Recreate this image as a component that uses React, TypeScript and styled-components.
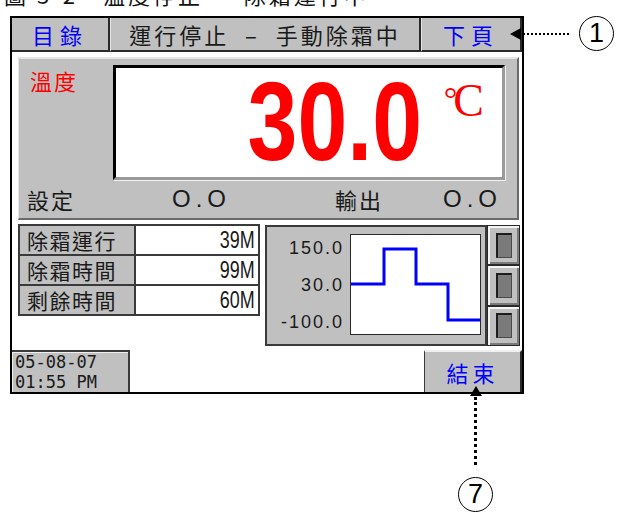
import styled, { createGlobalStyle } from "styled-components";

const GlobalStyle = createGlobalStyle`
   body {
      margin: 0;
      background: #fff;
      font-family: "Noto Sans CJK TC", "Noto Sans", sans-serif;
   }
`;

const GRAY = "#c0c0c0";
const CJK = `"Noto Sans CJK TC", "Noto Sans CJK SC", sans-serif`;

const rows = [
   { label: "除霜運行", value: "39M" },
   { label: "除霜時間", value: "99M" },
   { label: "剩餘時間", value: "60M" },
];

export default function App() {
   return (
      <Page>
         <GlobalStyle />
         <Caption>
            <span>圖 3-2　溫度停止 － 除霜運行中</span>
         </Caption>
         <Screen>
            <TopBar>
               <NavButton $width={98} $color="#0000ff" $spacing={6}>
                  目錄
               </NavButton>
               <NavButton $width={311} $color="#1a1a1a" $spacing={3}>
                  {"運行停止  –  手動除霜中"}
               </NavButton>
               <NavButton $width={101} $color="#0000ff" $spacing={6}>
                  下頁
               </NavButton>
            </TopBar>

            <MainPanel>
               <PanelTop>
                  <TempLabel>溫度</TempLabel>
                  <DisplayBox>
                     <BigValue>30.0</BigValue>
                     <Unit>
                        <Deg>°</Deg>C
                     </Unit>
                  </DisplayBox>
               </PanelTop>
               <PanelBottom>
                  <FieldLabel $width={145}>設定</FieldLabel>
                  <FieldValue $width={163}>O.O</FieldValue>
                  <FieldLabel $width={108}>輸出</FieldLabel>
                  <FieldValue $width={70}>O.O</FieldValue>
               </PanelBottom>
            </MainPanel>

            <MiddleRow>
               <Table>
                  {rows.map(({ label, value }) => (
                     <TableRow key={label}>
                        <LabelCell>{label}</LabelCell>
                        <ValueCell>
                           <span>{value}</span>
                        </ValueCell>
                     </TableRow>
                  ))}
               </Table>

               <Chart>
                  <Graph>
                     <Axis>
                        <span>150.0</span>
                        <span>30.0</span>
                        <span>-100.0</span>
                     </Axis>
                     <Plot>
                        <svg width="129" height="99" viewBox="0 0 129 99">
                           <polyline
                              points="0,49 33,49 33,14 65,14 65,49 97,49 97,85 129,85"
                              fill="none"
                              stroke="#0000ff"
                              strokeWidth="3"
                           />
                        </svg>
                     </Plot>
                  </Graph>
                  <SideButtons>
                     {[0, 1, 2].map((i) => (
                        <SideButton key={i}>
                           <SideKnob />
                        </SideButton>
                     ))}
                  </SideButtons>
               </Chart>
            </MiddleRow>

            <BottomRow>
               <DateBox>
                  <div>05-08-07</div>
                  <div>01:55 PM</div>
               </DateBox>
               <EndButton>結束</EndButton>
            </BottomRow>

            <CalloutRight>
               <ArrowLeft />
               <DotsH />
               <Circled>1</Circled>
            </CalloutRight>
            <CalloutBottom>
               <ArrowUp />
               <DotsV />
               <Circled>7</Circled>
            </CalloutBottom>
         </Screen>
      </Page>
   );
}

const Page = styled.div`
   padding-left: 10px;
   width: 614px;
   height: 518px;
   overflow: hidden;
`;

const Caption = styled.div`
   height: 16px;
   overflow: hidden;
   margin-left: -6px;

   span {
      display: block;
      margin-top: -21px;
      font-family: ${CJK};
      font-size: 22px;
      line-height: 30px;
      letter-spacing: 3px;
      color: #111;
   }
`;

const Screen = styled.div`
   position: relative;
   box-sizing: border-box;
   width: 514px;
   height: 378px;
   border: 2px solid #000;
   background: #fff;
   display: flex;
   flex-direction: column;
`;

const TopBar = styled.div`
   display: flex;
   height: 34px;
`;

const NavButton = styled.div<{ $width: number; $color: string; $spacing: number }>`
   box-sizing: border-box;
   width: ${(p) => p.$width}px;
   background: ${GRAY};
   border-left: 1px solid #e4e4e4;
   border-right: 2px solid #2a2a2a;
   border-bottom: 2px solid #2a2a2a;
   display: flex;
   align-items: center;
   justify-content: center;
   font-family: ${CJK};
   font-size: 22px;
   letter-spacing: ${(p) => p.$spacing}px;
   white-space: pre;
   color: ${(p) => p.$color};

   &:first-child {
      border-left: none;
   }
`;

const MainPanel = styled.div`
   box-sizing: border-box;
   height: 163px;
   margin: 5px 3px 0 6px;
   background: ${GRAY};
   border-top: 2px solid #e6e6e6;
   border-left: 1px solid #e6e6e6;
   border-right: 2px solid #6a6a6a;
   border-bottom: 2px solid #6a6a6a;
   display: flex;
   flex-direction: column;
`;

const PanelTop = styled.div`
   display: flex;
   align-items: flex-start;
   padding: 6px 12px 0 0;
`;

const TempLabel = styled.div`
   flex: 0 0 83px;
   padding-left: 11px;
   font-family: ${CJK};
   font-size: 22px;
   line-height: 30px;
   letter-spacing: 2px;
   color: #ff0000;
`;

const DisplayBox = styled.div`
   box-sizing: border-box;
   flex: 1;
   height: 115px;
   background: #fff;
   border-top: 3px solid #000;
   border-left: 3px solid #000;
   border-right: 3px solid #9a9a9a;
   border-bottom: 3px solid #9a9a9a;
   box-shadow: 1px 1px 0 #f2f2f2;
   display: flex;
   justify-content: flex-end;
   align-items: flex-start;
   padding-right: 22px;
`;

const BigValue = styled.div`
   font-family: "Liberation Sans", Arial, sans-serif;
   font-weight: 700;
   font-size: 112px;
   line-height: 108px;
   color: #ff0000;
   transform: scaleX(0.8);
   transform-origin: right center;
   margin-right: 22px;
`;

const Unit = styled.div`
   font-family: "Liberation Serif", serif;
   font-size: 46px;
   line-height: 46px;
   margin-top: 8px;
   color: #ff0000;
   letter-spacing: -4px;
`;

const Deg = styled.span`
   font-size: 34px;
   vertical-align: 6px;
`;

const PanelBottom = styled.div`
   flex: 1;
   display: flex;
   align-items: center;
   padding-left: 8px;
`;

const FieldLabel = styled.div<{ $width: number }>`
   width: ${(p) => p.$width}px;
   font-family: ${CJK};
   font-size: 22px;
   letter-spacing: 2px;
   color: #1a1a1a;
`;

const FieldValue = styled.div<{ $width: number }>`
   width: ${(p) => p.$width}px;
   font-family: "Liberation Sans", sans-serif;
   font-size: 24px;
   letter-spacing: 5px;
   color: #1a1a1a;
`;

const MiddleRow = styled.div`
   display: flex;
   gap: 5px;
   height: 122px;
   margin-top: 4px;
   padding-left: 6px;
`;

const Table = styled.div`
   box-sizing: border-box;
   align-self: flex-start;
   width: 242px;
   border: 2px solid #3a3a3a;
   background: #3a3a3a;
   display: flex;
   flex-direction: column;
   gap: 2px;
`;

const TableRow = styled.div`
   display: flex;
   height: 28px;
   gap: 2px;
`;

const LabelCell = styled.div`
   box-sizing: border-box;
   width: 114px;
   background: ${GRAY};
   padding-left: 7px;
   display: flex;
   align-items: center;
   font-family: ${CJK};
   font-size: 21px;
   letter-spacing: 1.5px;
   color: #1a1a1a;
`;

const ValueCell = styled.div`
   flex: 1;
   background: #fff;
   display: flex;
   align-items: center;
   justify-content: flex-end;
   padding-right: 3px;

   span {
      font-family: "Liberation Sans", sans-serif;
      font-size: 23px;
      color: #1a1a1a;
      transform: scaleX(0.78);
      transform-origin: right center;
   }
`;

const Chart = styled.div`
   display: flex;
   height: 121px;
   margin-top: 1px;
`;

const Graph = styled.div`
   box-sizing: border-box;
   width: 222px;
   background: ${GRAY};
   border: 2px solid #3a3a3a;
   display: flex;
   padding: 7px 4px 8px 0;
`;

const Axis = styled.div`
   width: 77px;
   padding-right: 6px;
   display: flex;
   flex-direction: column;
   align-items: flex-end;
   gap: 17px;
   padding-top: 4px;

   span {
      font-family: "Liberation Sans", sans-serif;
      font-size: 18px;
      line-height: 20px;
      letter-spacing: 2px;
      color: #1a1a1a;
   }
`;

const Plot = styled.div`
   box-sizing: border-box;
   width: 131px;
   height: 101px;
   background: #fff;
   border: 1px solid #2a2a2a;

   svg {
      display: block;
   }
`;

const SideButtons = styled.div`
   display: flex;
   flex-direction: column;
   width: 33px;
`;

const SideButton = styled.div`
   box-sizing: border-box;
   flex: 1;
   background: ${GRAY};
   border: 1px solid #2a2a2a;
   box-shadow: inset 2px 2px 0 #f4f4f4, inset -2px -2px 0 #7a7a7a;
   display: flex;
   align-items: center;
   justify-content: center;
`;

const SideKnob = styled.div`
   box-sizing: border-box;
   width: 16px;
   height: 25px;
   background: #7b7b7b;
   border-top: 2px solid #1e1e1e;
   border-left: 2px solid #1e1e1e;
   border-right: 1px solid #4a4a4a;
   border-bottom: 1px solid #4a4a4a;
`;

const BottomRow = styled.div`
   margin-top: auto;
   display: flex;
   justify-content: space-between;
   align-items: flex-end;
   height: 42px;
`;

const DateBox = styled.div`
   box-sizing: border-box;
   width: 118px;
   height: 42px;
   background: ${GRAY};
   border: 2px solid #3a3a3a;
   border-bottom: none;
   border-left: none;
   box-shadow: inset 1px 1px 0 #eee;
   padding: 0 0 0 3px;
   font-family: "DejaVu Sans Mono", monospace;
   font-size: 17px;
   line-height: 20px;
   color: #1a1a1a;
`;

const EndButton = styled.div`
   box-sizing: border-box;
   width: 98px;
   height: 42px;
   background: ${GRAY};
   border-top: 2px solid #f0f0f0;
   border-left: 1px solid #3a3a3a;
   border-right: 2px solid #2a2a2a;
   display: flex;
   align-items: center;
   justify-content: center;
   font-family: ${CJK};
   font-size: 22px;
   letter-spacing: 4px;
   color: #0000ff;
`;

const CalloutRight = styled.div`
   position: absolute;
   left: 498px;
   top: -2px;
   display: flex;
   align-items: center;
`;

const ArrowLeft = styled.div`
   width: 0;
   height: 0;
   border-top: 6px solid transparent;
   border-bottom: 6px solid transparent;
   border-right: 11px solid #000;
`;

const DotsH = styled.div`
   width: 46px;
   border-top: 2px dotted #000;
   margin: 0 10px 0 2px;
`;

const CalloutBottom = styled.div`
   position: absolute;
   left: 446px;
   top: 368px;
   display: flex;
   flex-direction: column;
   align-items: center;
   width: 35px;
`;

const ArrowUp = styled.div`
   width: 0;
   height: 0;
   border-left: 6px solid transparent;
   border-right: 6px solid transparent;
   border-bottom: 10px solid #000;
`;

const DotsV = styled.div`
   height: 68px;
   border-left: 3px dotted #000;
   margin: 1px 0 12px;
`;

const Circled = styled.div`
   box-sizing: border-box;
   width: 35px;
   height: 35px;
   border: 1.5px solid #000;
   border-radius: 50%;
   display: flex;
   align-items: center;
   justify-content: center;
   font-family: "Liberation Sans", sans-serif;
   font-size: 27px;
   color: #000;
   background: #fff;
`;
